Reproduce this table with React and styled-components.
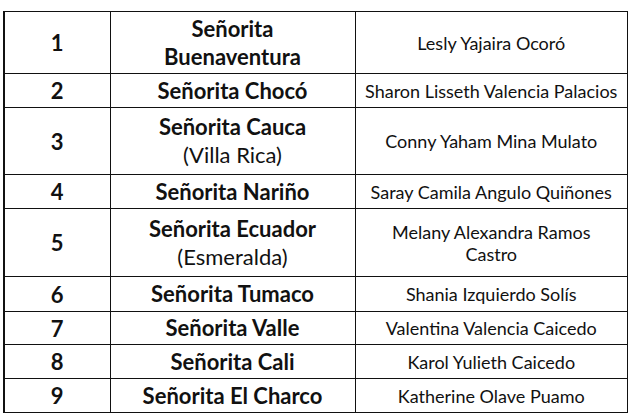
import React from "react";
import styled, { createGlobalStyle } from "styled-components";

const GlobalStyle = createGlobalStyle`
  html, body {
    margin: 0;
    padding: 0;
    background: #ffffff;
  }
  body {
    font-family: Lato, "Open Sans", sans-serif;
    color: #111111;
  }
`;

const Page = styled.div`
  width: 644px;
  height: 417px;
  padding: 11px 0 0 3px;
  box-sizing: border-box;
  background: #ffffff;
`;

const Table = styled.table`
  border-collapse: collapse;
  table-layout: fixed;
  width: 625px;
  border-left: 2px solid #111;
`;

const Row = styled.tr`
  height: ${(p) => p.$h}px;
`;

const Cell = styled.td`
  border: 1px solid #111;
  padding: 0 2px;
  text-align: center;
  vertical-align: middle;
  box-sizing: border-box;
`;

const NumCell = styled(Cell)`
  width: 106px;
  font-weight: 700;
  font-size: 22px;
`;

const TitleCell = styled(Cell)`
  width: 245px;
  font-size: 22px;
  line-height: 28px;
  white-space: nowrap;
`;

const Title = styled.span`
  font-weight: 700;
`;

const Place = styled.span`
  font-weight: 400;
`;

const NameCell = styled(Cell)`
  font-size: 18px;
  line-height: 22px;
  white-space: nowrap;
`;

const rows = [
  { n: 1, title: ["Señorita", "Buenaventura"], name: "Lesly Yajaira Ocoró", h: 62 },
  { n: 2, title: ["Señorita Chocó"], name: "Sharon Lisseth Valencia Palacios", h: 34 },
  { n: 3, title: ["Señorita Cauca"], place: "(Villa Rica)", name: "Conny Yaham Mina Mulato", h: 67 },
  { n: 4, title: ["Señorita Nariño"], name: "Saray Camila Angulo Quiñones", h: 34 },
  { n: 5, title: ["Señorita Ecuador"], place: "(Esmeralda)", name: ["Melany Alexandra Ramos", "Castro"], h: 68 },
  { n: 6, title: ["Señorita Tumaco"], name: "Shania Izquierdo Solís", h: 35 },
  { n: 7, title: ["Señorita Valle"], name: "Valentina Valencia Caicedo", h: 33 },
  { n: 8, title: ["Señorita Cali"], name: "Karol Yulieth Caicedo", h: 34 },
  { n: 9, title: ["Señorita El Charco"], name: "Katherine Olave Puamo", h: 34 },
];

const App = () => {
  return (
    <Page>
      <GlobalStyle />
      <Table>
        <tbody>
          {rows.map((r) => (
            <Row key={r.n} $h={r.h}>
              <NumCell>{r.n}</NumCell>
              <TitleCell>
                {r.title.map((t, i) => (
                  <React.Fragment key={i}>
                    {i > 0 && <br />}
                    <Title>{t}</Title>
                  </React.Fragment>
                ))}
                {r.place && (
                  <>
                    <br />
                    <Place>{r.place}</Place>
                  </>
                )}
              </TitleCell>
              <NameCell>
                {Array.isArray(r.name) ? (
                  <>
                    {r.name[0]}
                    <br />
                    {r.name[1]}
                  </>
                ) : (
                  r.name
                )}
              </NameCell>
            </Row>
          ))}
        </tbody>
      </Table>
    </Page>
  );
};

export default App;
